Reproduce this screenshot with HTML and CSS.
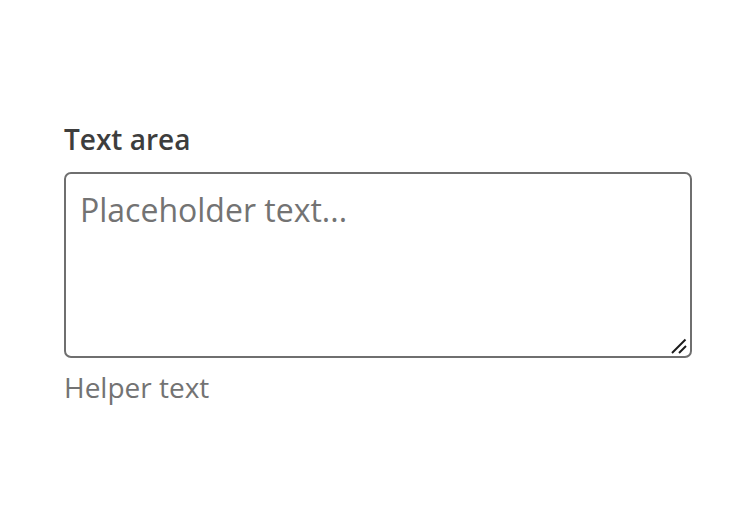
FILE: index.html
```html
<!DOCTYPE html>
<html>
<head>
<meta charset="utf-8">
<link rel="stylesheet" href="styles.css">
</head>
<body>
<div class="field">
  <label class="label" for="ta">Text area</label>
  <div class="box">
    <textarea id="ta" class="textarea" placeholder="Placeholder text..."></textarea>
    <svg class="grip" width="16" height="16" viewBox="0 0 16 16" aria-hidden="true">
      <line x1="1" y1="15" x2="14.5" y2="1.5" stroke="#1a1a1a" stroke-width="2"/>
      <line x1="8" y1="15" x2="15" y2="8" stroke="#1a1a1a" stroke-width="2"/>
    </svg>
  </div>
  <div class="helper">Helper text</div>
</div>
</body>
</html>
```
FILE: styles.css
```css
html, body {
  margin: 0;
  background: #fff;
}
body {
  font-family: "Open Sans", sans-serif;
}
.field {
  display: flex;
  flex-direction: column;
  padding: 118px 64px 0 64px;
  width: 628px;
}
.label {
  font-size: 28px;
  font-weight: 600;
  color: #3d3d3d;
  line-height: 42px;
  margin-bottom: 12px;
}
.box {
  position: relative;
  width: 628px;
  height: 186px;
}
.textarea {
  display: block;
  box-sizing: border-box;
  width: 100%;
  height: 100%;
  border: 2px solid #6f6f6f;
  border-radius: 7px;
  padding: 16px 14px 14px 14px;
  font-family: "Open Sans", sans-serif;
  font-size: 32px;
  line-height: 40px;
  color: #333;
  resize: none;
  margin: 0;
  outline: none;
}
.textarea::placeholder {
  color: #737373;
}
.grip {
  position: absolute;
  right: 5px;
  bottom: 4px;
}
.helper {
  margin-top: 8px;
  font-size: 28px;
  line-height: 42px;
  color: #737373;
}
```
